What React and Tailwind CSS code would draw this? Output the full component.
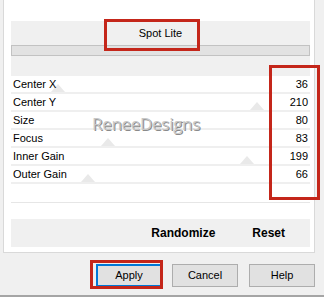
export default function App() {
  const rows = [
    { label: "Center X", value: "36", thumb: 58 },
    { label: "Center Y", value: "210", thumb: 257 },
    { label: "Size", value: "80", thumb: null },
    { label: "Focus", value: "83", thumb: 108 },
    { label: "Inner Gain", value: "199", thumb: 247 },
    { label: "Outer Gain", value: "66", thumb: 88 },
  ];

  return (
    <div className="relative flex h-[297px] w-[324px] flex-col overflow-hidden bg-[#f0f0f0] font-['Liberation_Sans',Arial,sans-serif] text-[11px] leading-none text-black">
      {/* main white panel */}
      <div className="ml-[3px] h-[253px] w-[312px] shrink-0 border-b border-l border-r border-[#d9d9d9] bg-white pl-[7px] pr-[4px] pt-[21px]">
        {/* top gray header */}
        <div className="flex h-[55px] flex-col bg-[#f0f0f0]">
          <div className="flex h-[24px] items-center justify-center">Spot Lite</div>
          <div className="h-[11px] border border-[#c2c2c2] bg-[#e2e2e2]" />
        </div>

        {/* parameter rows */}
        <div className="flex flex-col">
          {rows.map((r) => (
            <div
              key={r.label}
              className="relative flex h-[18px] items-center justify-between border-b-2 border-[#efefef] px-[2px] pt-px"
            >
              {r.thumb !== null && (
                <div
                  className="absolute bottom-0 h-0 w-0 border-b-[8px] border-l-[7px] border-r-[7px] border-b-[#e9e9e9] border-l-transparent border-r-transparent"
                  style={{ left: r.thumb - 11 - 7 }}
                />
              )}
              <span className="relative">{r.label}</span>
              <span className="relative">{r.value}</span>
            </div>
          ))}
        </div>

        <div className="mt-[18px] h-px bg-[#e6e6e6]" />

        <div className="mt-[16px] flex h-[28px] items-center justify-end gap-[37px] bg-[#f0f0f0] pr-[25px] text-[12px] font-bold">
          <span>Randomize</span>
          <span>Reset</span>
        </div>
      </div>

      {/* bottom buttons */}
      <div className="flex flex-1 items-start pt-[11px]">
        <button className="ml-[96px] flex h-[23px] w-[66px] items-center justify-center border-2 border-[#0078d7] bg-[#e1e1e1] text-[11px]">
          Apply
        </button>
        <button className="ml-[10px] flex h-[23px] w-[66px] items-center justify-center border border-[#adadad] bg-[#e1e1e1] text-[11px]">
          Cancel
        </button>
        <button className="ml-[11px] flex h-[23px] w-[66px] items-center justify-center border border-[#adadad] bg-[#e1e1e1] text-[11px]">
          Help
        </button>
      </div>
      <div className="h-[2px] shrink-0 bg-[#a5a5a5]" />

      {/* watermark */}
      <div className="pointer-events-none absolute left-[92px] top-[115px] font-['Open_Sans',sans-serif] text-[17px] tracking-[-0.3px] text-[#c8c8c8] [text-shadow:1px_1px_0_#8a8a8a]">
        ReneeDesigns
      </div>

      {/* red annotation boxes */}
      <div className="pointer-events-none absolute left-[104px] top-[19px] h-[32px] w-[96px] border-[3px] border-[#c4261a]" />
      <div className="pointer-events-none absolute left-[269px] top-[65px] h-[135px] w-[51px] border-[3px] border-[#c4261a]" />
      <div className="pointer-events-none absolute left-[90px] top-[260px] h-[29px] w-[73px] border-[3px] border-[#c4261a]" />
    </div>
  );
}
